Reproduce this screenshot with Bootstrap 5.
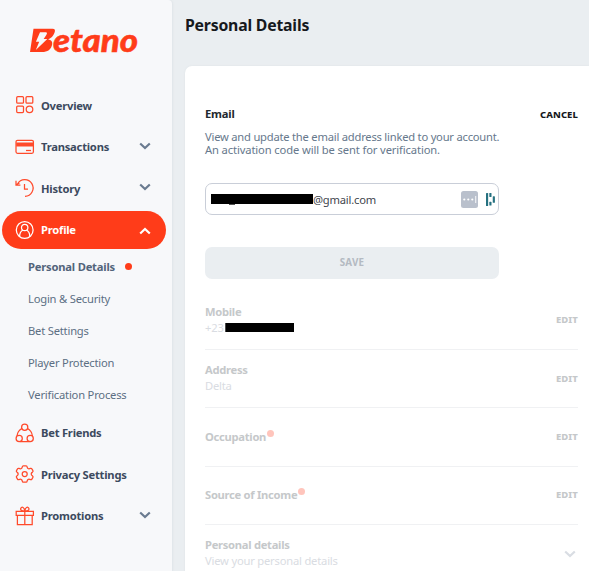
<!DOCTYPE html>
<html lang="en">
<head>
<meta charset="utf-8">
<meta name="viewport" content="width=device-width, initial-scale=1">
<title>Personal Details</title>
<link href="https://cdn.jsdelivr.net/npm/bootstrap@5.3.0/dist/css/bootstrap.min.css" rel="stylesheet">
<style>
body{font:400 11.2px/13px "Noto Sans",sans-serif;letter-spacing:-.2px;background:#eaeef1;color:#66788c;height:571px;overflow:hidden}
svg{display:block;flex:none}
.side{width:172px;background:#f7f8fa;flex:none;box-shadow:1px 0 2px #dfe4e8;border-top-right-radius:4px}
.brand-logo{margin:20px 0 0 26px;overflow:visible}
.menu{margin-top:26px;padding:0 6px 0 2px}
.menu-item{height:38px;margin-bottom:3.5px;padding:0 15px 0 13px;border-radius:19px;color:#3c4a5e;font-weight:700;letter-spacing:-.23px;text-decoration:none}
.menu-item.current{background:#ff3c19;color:#fff;margin-bottom:2px}
.menu-icon{width:20px;height:20px;margin-right:6px;fill:none;stroke:#ff4a2b;stroke-width:1.25;overflow:visible}
.current .menu-icon{stroke:#fff}
.chev{width:12px;height:8px;fill:none;stroke:#6a7b90;stroke-width:2.2}
.menu-item .chev{margin-bottom:2px}
.menu-item.current .chev{stroke:#fff;margin-bottom:0;margin-top:2px}
.submenu{margin-bottom:3px}
.sub-item{height:32px;padding-left:26px;color:#5c6f83;text-decoration:none}
.sub-item.chosen{font-weight:700;color:#52647a}
.alert-dot{width:7px;height:7px;border-radius:50%;background:#ff3c19;margin-left:10px}
.page-title{font-size:15.8px;line-height:22px;font-weight:700;letter-spacing:-.2px;color:#16191d;margin:14px 0 30px}
.main-col{padding-left:13px}
.panel{height:520px;border-radius:7px 0 0 0;box-shadow:0 0 2px #dce1e5;padding:41px 11px 0 20px}
.section-name{font-weight:700;color:#22282e;line-height:14px}
.action{font-size:9.5px;font-weight:800;letter-spacing:.1px;color:#16191d}
.desc{margin:8.500px 0 27.500px;white-space:nowrap}
.desc-first{letter-spacing:-.22px}
.desc-second{letter-spacing:-.12px}
.field{width:294px;height:32px;border:1px solid #c9ced8;border-radius:7px;color:#3f464e;padding:0 3px 0 5px}
.save{width:294px;height:32px;margin-top:32px;border-radius:7px;background:#eaeef1;color:#b4bac2;font-size:9.8px;line-height:30px;font-weight:700;letter-spacing:.2px;border:0}
.rows{margin-top:12.5px}
.info{height:58.35px;border-bottom:1px solid #f0f1f3;color:#d9dce2;line-height:16px}
.info-text{margin-top:-1px}
.info b{font-weight:700;color:#c5c8ca;letter-spacing:-.28px}
.info .action{color:#c5c8ca}
.info .chev{stroke:#d9dde3;margin-right:2px}
.pale-dot{width:7px;height:7px;border-radius:50%;background:#ffc5bc;margin:1px 0 0 1px}
</style>
<script src="https://cdn.jsdelivr.net/npm/bootstrap@5.3.0/dist/js/bootstrap.bundle.min.js"></script>
</head>
<body>
<div class="d-flex h-100">
<aside class="side">
  <svg class="brand-logo" width="116" height="40" viewBox="26 20 116 40" role="img" aria-label="Betano" font-family="Lato,sans-serif" font-weight="900" font-style="italic" fill="#ff3c19" stroke="#ff3c19">
    <path stroke="none" d="M33.500 28.800h19c2.500 0 3 1.500 2 4-1.200 3.400-3.500 5.400-6.300 6.600 3 .3 4.500 2 4 4.800-.9 5.300-4.700 7.800-10.200 7.800H30z"/>
    <path fill="#f7f8fa" stroke="none" d="M40 32.300h5.800c1.700 0 1.300 1.500.5 2.700l-2.600 4h3.600L35.800 50l3.400-8.300h-3.300z"/>
    <text x="53" y="51.500" font-size="32" stroke-width=".5" letter-spacing="0" textLength="85" lengthAdjust="spacingAndGlyphs">etano</text>
  </svg>
  <nav class="menu">
    <a class="menu-item d-flex align-items-center"><svg class="menu-icon" viewBox="0 0 20 20"><rect x="1.700" y="1.700" width="6.800" height="6.500" rx="1"/><rect x="11" y="1.700" width="6.800" height="6.500" rx="1"/><rect x="1.700" y="11" width="6.800" height="6.500" rx="1"/><circle cx="14.500" cy="14.300" r="3.300"/></svg><span>Overview</span></a>
    <a class="menu-item d-flex align-items-center"><svg class="menu-icon" viewBox="0 0 20 20"><rect x="1" y="3.300" width="17.400" height="13" rx="1.500"/><path stroke-width="4" d="M1.200 7.500h17"/><path d="M11 13.500h5"/></svg><span>Transactions</span><svg class="chev ms-auto" viewBox="0 0 12 8"><path d="M1.200 1.500L6 6l4.800-4.500"/></svg></a>
    <a class="menu-item d-flex align-items-center"><svg class="menu-icon" viewBox="0 0 20 20"><path d="M2.500 6A8.300 8.300 0 1 1 10 18.300M1 2.800v4.200h4.400M1.500 6.500 4.500 5"/><path d="M9.500 6v5H13"/></svg><span>History</span><svg class="chev ms-auto" viewBox="0 0 12 8"><path d="M1.200 1.500L6 6l4.800-4.500"/></svg></a>
    <a class="menu-item current d-flex align-items-center"><svg class="menu-icon" viewBox="0 0 20 20"><circle cx="9.700" cy="10" r="8.400"/><circle cx="9.700" cy="7.500" r="3.200"/><path d="M4.600 16.500c0-3.600 1.400-5.500 3.300-6.500M14.800 16.500c0-3.600-1.400-5.500-3.300-6.500"/></svg><span>Profile</span><svg class="chev ms-auto" viewBox="0 0 12 8"><path d="M1.200 6.500L6 2l4.800 4.500"/></svg></a>
    <div class="submenu">
      <a class="sub-item chosen d-flex align-items-center">Personal Details<i class="alert-dot"></i></a>
      <a class="sub-item d-flex align-items-center">Login &amp; Security</a>
      <a class="sub-item d-flex align-items-center">Bet Settings</a>
      <a class="sub-item d-flex align-items-center">Player Protection</a>
      <a class="sub-item d-flex align-items-center">Verification Process</a>
    </div>
    <a class="menu-item d-flex align-items-center"><svg class="menu-icon" viewBox="0 0 20 20"><circle cx="9.700" cy="4.300" r="3.100"/><circle cx="4.200" cy="15.400" r="3.100"/><circle cx="15.200" cy="15.400" r="3.100"/><path d="M7.200 5.200C4 7 2.300 9.500 2 13M12.200 5.200c3.200 1.800 4.900 4.300 5.200 7.800M5 18.500h9.500"/></svg><span>Bet Friends</span></a>
    <a class="menu-item d-flex align-items-center"><svg class="menu-icon" viewBox="0 0 20 20"><path stroke-linejoin="round" d="M8.300 1.800h2.800q.9 0 1 1 .2 1.500 1.300 1.900 1 .2 2-.3 1-.4 1.500.5l1 1.700q.5.9-.4 1.500-1.300.8-1.300 1.900t1.300 1.900q.9.600.4 1.500l-1 1.700q-.5.900-1.500.5-1-.5-2-.3-1.100.4-1.300 1.900-.1 1-1 1H8.300q-.9 0-1-1-.2-1.500-1.300-1.900-1-.2-2 .3-1 .4-1.500-.5l-1-1.700q-.5-.9.4-1.500 1.300-.8 1.300-1.900T1.900 8.100Q1 7.500 1.500 6.600l1-1.700q.5-.9 1.500-.5 1 .5 2 .3 1.100-.4 1.300-1.900.1-1 1-1z"/><circle cx="9.700" cy="10" r="2.500"/></svg><span>Privacy Settings</span></a>
    <a class="menu-item d-flex align-items-center"><svg class="menu-icon" viewBox="0 0 20 20"><path d="M1.200 5.300h17.200v4H1.200zM2.400 9.300v9.200h14.800V9.300M9.800 5.300v13.200"/><path d="M9.800 5.200C6 5.300 5.300 3.500 5.800 2.200 6.800.3 9.500 1.200 9.800 5.200c.3-4 3-4.900 4-3 .5 1.300-.2 3.100-4 3z"/></svg><span>Promotions</span><svg class="chev ms-auto" viewBox="0 0 12 8"><path d="M1.200 1.500L6 6l4.800-4.500"/></svg></a>
  </nav>
</aside>
<main class="main-col flex-grow-1">
  <h1 class="page-title">Personal Details</h1>
  <section class="panel bg-white">
    <div class="d-flex justify-content-between align-items-center"><span class="section-name">Email</span><span class="action">CANCEL</span></div>
    <div class="desc"><div class="desc-first">View and update the email address linked to your account.</div><div class="desc-second">An activation code will be sent for verification.</div></div>
    <div class="field d-flex align-items-center">
      <svg width="102" height="12" viewBox="0 0 102 12"><path d="M0 1h102v10H0z"/><path stroke="#555" d="M18 11.500h6"/></svg><span>@gmail.com</span>
      <svg class="ms-auto" width="17" height="17" viewBox="0 0 17 17"><rect width="17" height="17" rx="2.500" fill="#b9c0cc"/><g fill="#fff"><circle cx="3.300" cy="8.500" r="1.100"/><circle cx="7.300" cy="8.500" r="1.100"/><circle cx="11.300" cy="8.500" r="1.100"/><path d="M14.300 5h.9v7h-.9z"/></g></svg>
      <svg class="ms-2 me-0" width="9" height="13" viewBox="0 0 10 13" preserveAspectRatio="none" fill="#267180"><rect width="2.400" height="13" rx=".6"/><rect x="3.700" y="0" width="2.400" height="4" rx=".6"/><rect x="3.700" y="8.800" width="2.400" height="3.800" rx=".6"/><rect x="7.500" y="3.300" width="2.400" height="6.500" rx=".6"/></svg>
    </div>
    <button class="save d-block p-0">SAVE</button>
    <div class="rows">
      <div class="info d-flex align-items-center justify-content-between"><div class="info-text"><b>Mobile</b><div class="d-flex align-items-center">+23<svg width="70" height="9" viewBox="0 0 70 9"><path d="M1.300 0H70v9H1.300z"/></svg></div></div><span class="action">EDIT</span></div>
      <div class="info d-flex align-items-center justify-content-between"><div class="info-text"><b>Address</b><div>Delta</div></div><span class="action">EDIT</span></div>
      <div class="info d-flex align-items-center justify-content-between"><div class="d-flex"><b>Occupation</b><i class="pale-dot"></i></div><span class="action">EDIT</span></div>
      <div class="info d-flex align-items-center justify-content-between"><div class="d-flex"><b>Source of Income</b><i class="pale-dot"></i></div><span class="action">EDIT</span></div>
      <div class="info d-flex align-items-center justify-content-between"><div class="info-text"><b>Personal details</b><div>View your personal details</div></div><svg class="chev" viewBox="0 0 12 8"><path d="M1.200 1.500L6 6l4.800-4.500"/></svg></div>
    </div>
  </section>
</main>
</div>
</body>
</html>
